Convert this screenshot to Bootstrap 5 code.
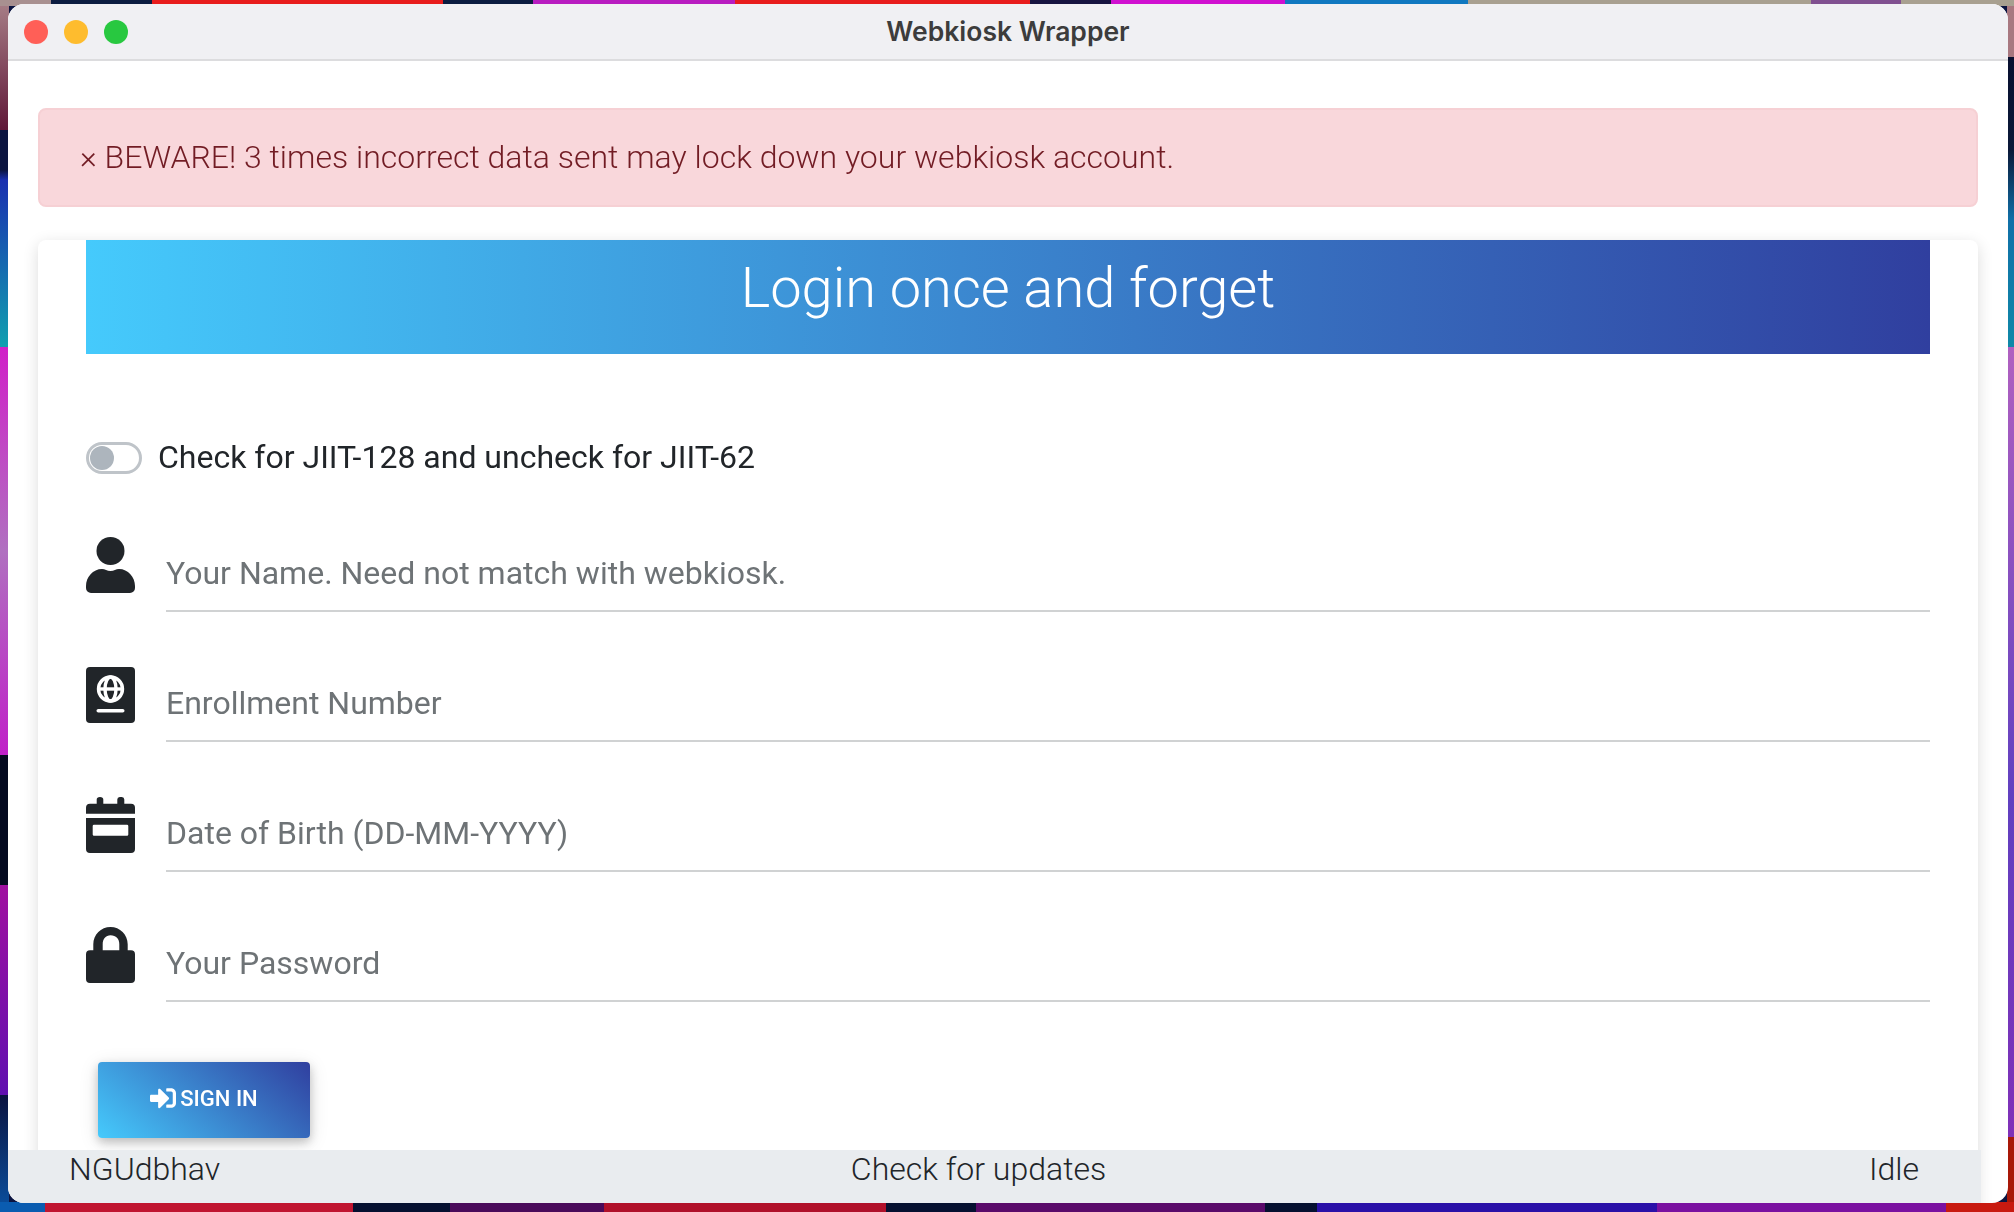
<!DOCTYPE html>
<html lang="en">
<head>
<meta charset="utf-8">
<title>Webkiosk Wrapper</title>
<link rel="stylesheet" href="https://cdn.jsdelivr.net/npm/bootstrap@5.3.0/dist/css/bootstrap.min.css">
<style>
html,body{height:100%;margin:0}
body{font-family:Roboto,"Liberation Sans",sans-serif;overflow:hidden;background-color:#0b1440;background-repeat:no-repeat;
 background-image:
 linear-gradient(90deg,#a89090 0 51px,#0b1c40 51px 152px,#e81c1c 152px 443px,#0b1c40 443px 533px,#b81cc0 533px 735px,#e81c1c 735px 1030px,#161440 1030px 1111px,#d010d0 1111px 1285px,#1078c0 1285px 1468px,#a8a090 1468px 1811px,#805090 1811px 1901px,#a8a090 1901px),
 linear-gradient(90deg,#0a5cb0 0 45px,#c01530 45px 353px,#051030 353px 450px,#4a0a5a 450px 604px,#b0102a 604px 886px,#051030 886px 976px,#5a0a6a 976px 1265px,#051030 1265px 1317px,#2a10a8 1317px 1657px,#7a10a0 1657px 1946px,#c81a10 1946px),
 linear-gradient(180deg,#a88088 0,#601838 130px,#0b1440 130px 170px,#1a30b0 180px,#10a0b0 347px,#d020c8 347px,#b070c0 550px,#c020c8 755px,#050a20 755px 885px,#a010a0 885px,#6010b0 1095px,#0b1440 1095px,#0a50a0 1212px),
 linear-gradient(180deg,#a87880 0 57px,#081030 57px,#0a1838 150px,#1070a8 220px,#1088a8 347px,#b060c0 347px,#6040c0 800px,#8030b8 1137px,#a81808 1137px);
 background-size:100% 6px,100% 10px,9px 100%,7px 100%;
 background-position:0 0,0 100%,0 0,100% 0;}
.app-window{position:fixed;left:8px;top:4px;width:2000px;height:1199px;background:#fff;border-radius:16px;overflow:hidden;display:flex;flex-direction:column}
.title-bar{height:57px;flex:none;background:#f0f0f3;border-bottom:2px solid #dcdcde;position:relative;display:flex;align-items:center;justify-content:center;padding-bottom:2px}
.title-text{font:600 26.500px Inter,"Liberation Sans",sans-serif;color:#3c3c3c}
.lights{position:absolute;left:16px;top:16px;display:flex;gap:16px}
.light{width:24px;height:24px;border-radius:50%;display:block}
.app-body{flex:1 1 auto;min-height:0;overflow:hidden;padding:47px 30px 0}
.warn-box{height:99px;background:#f9d7db;border:2px solid #f6d0d4;border-radius:8px;color:#721c24;font-weight:300;font-size:32px;line-height:48px;padding:23px 40px;margin-bottom:33px}
.login-box{height:1100px;background:#fff;border-radius:8px;padding:0 48px;box-shadow:0 4px 16px rgba(0,0,0,.14)}
.login-head{height:114px;background:linear-gradient(to right,#45cafc,#303f9f);color:#fff;text-align:center;font-weight:300;font-size:56px;line-height:96px}
.switch-row{padding-top:79px;height:183px;font-size:32px;line-height:48px;color:#212529}
.sw{width:56px;height:32px;margin-top:9px;border:3px solid #bfc4c9;border-radius:16px;display:block;position:relative;flex:none}
.sw-knob{position:absolute;left:1px;top:1px;width:24px;height:24px;background:#adb5bd;border-radius:50%}
.field-row{height:130px}
.field-ico{width:49px;height:56px;flex:none;fill:#212529;display:block}
.field-input{border:0;border-bottom:2px solid #d0d2d3;border-radius:0;height:75px;padding:0 0 2px;font-size:32px;width:100%;margin-left:31px;outline:0;background:transparent;font-family:Roboto,sans-serif}
.field-input::placeholder{color:#6e7376}
.go-btn{width:212px;height:76px;margin-left:12px;margin-top:5px;padding:0 0 4px;background:linear-gradient(40deg,#45cafc,#303f9f);color:#fff;border:0;border-radius:4px;font-size:22px;font-weight:500;box-shadow:0 4px 10px rgba(0,0,0,.2),0 4px 20px rgba(0,0,0,.12)}
.status-bar{position:absolute;left:0;bottom:0;width:1973px;height:53px;background:#e9ecef;color:#212529;font-weight:300;font-size:32px;line-height:38px;padding:0 62px 0 61px}
.status-mid{margin-right:132px}
</style>
</head>
<body>
<div class="app-window">
  <div class="title-bar">
    <div class="lights"><i class="light" style="background:#ff5f57"></i><i class="light" style="background:#febc2e"></i><i class="light" style="background:#28c840"></i></div>
    <span class="title-text">Webkiosk Wrapper</span>
  </div>
  <div class="app-body">
    <div class="warn-box" role="alert">× BEWARE! 3 times incorrect data sent may lock down your webkiosk account.</div>
    <div class="login-box">
      <div class="login-head">Login once and forget</div>
      <div class="switch-row d-flex align-items-start gap-3">
        <span class="sw"><span class="sw-knob"></span></span>
        <span>Check for JIIT-128 and uncheck for JIIT-62</span>
      </div>
      <div class="field-row d-flex align-items-start">
        <svg class="field-ico" viewBox="0 0 49 56"><circle cx="24.500" cy="14" r="14"/><path d="M5 56a5 5 0 0 1-5-5v-2c0-9 7-17 16-17 3 0 5 2 8.500 2s5.500-2 8.500-2c9 0 16 8 16 17v2a5 5 0 0 1-5 5z"/></svg>
        <input class="field-input" placeholder="Your Name. Need not match with webkiosk.">
      </div>
      <div class="field-row d-flex align-items-start">
        <svg class="field-ico" viewBox="0 0 49 56"><rect width="49" height="56" rx="4"/><g fill="none" stroke="#fff" stroke-width="3.400"><circle cx="24.500" cy="22" r="12"/><ellipse cx="24.500" cy="22" rx="5.500" ry="12"/><path d="M12.500 22h24"/></g><rect x="10.500" y="42" width="28" height="3.600" rx="1.800" fill="#fff"/></svg>
        <input class="field-input" placeholder="Enrollment Number">
      </div>
      <div class="field-row d-flex align-items-start">
        <svg class="field-ico" viewBox="0 0 49 56"><path fill-rule="evenodd" d="M10.700 2.500a3.300 2.500 0 0 1 6.600 0v4.200h14V2.500a3.400 2.500 0 0 1 7 0v4.200H45a4 4 0 0 1 4 4v6H0v-6a4 4 0 0 1 4-4h6.700zM0 21h49v31a4 4 0 0 1-4 4H4a4 4 0 0 1-4-4zm8 6.700a1.300 1.300 0 0 0-1.300 1.300v8.500a1.300 1.300 0 0 0 1.300 1.300h33a1.300 1.300 0 0 0 1.300-1.300V29a1.300 1.300 0 0 0-1.300-1.300z"/></svg>
        <input class="field-input" placeholder="Date of Birth (DD-MM-YYYY)">
      </div>
      <div class="field-row d-flex align-items-start">
        <svg class="field-ico" viewBox="0 0 49 56"><path fill-rule="evenodd" d="M24.500 0C34 0 41.700 7.700 41.700 17.200v6.100H45a4 4 0 0 1 4 4V52a4 4 0 0 1-4 4H4a4 4 0 0 1-4-4V27.300a4 4 0 0 1 4-4h3.300v-6.100C7.300 7.700 15 0 24.500 0zm0 8.300c-4.600 0-7.800 3.800-7.800 8.900v6.100h16.600v-6.100c0-5.100-3.200-8.900-8.800-8.900z"/></svg>
        <input class="field-input" type="text" placeholder="Your Password">
      </div>
      <button class="btn go-btn d-flex align-items-center justify-content-center gap-1" type="button">
        <svg width="26" height="26" viewBox="0 0 512 512" fill="#fff"><path d="M416 448h-84c-6.600 0-12-5.400-12-12v-40c0-6.600 5.400-12 12-12h84c17.700 0 32-14.300 32-32V160c0-17.700-14.300-32-32-32h-84c-6.600 0-12-5.400-12-12V76c0-6.600 5.400-12 12-12h84c53 0 96 43 96 96v192c0 53-43 96-96 96zm-47-201L201 79c-15-15-41-4.500-41 17v96H24c-13.300 0-24 10.700-24 24v96c0 13.300 10.700 24 24 24h136v96c0 21.500 26 32 41 17l168-168c9.300-9.400 9.300-24.600 0-34z"/></svg>
        SIGN IN
      </button>
    </div>
  </div>
  <div class="status-bar d-flex justify-content-between">
    <span>NGUdbhav</span><span class="status-mid">Check for updates</span><span>Idle</span>
  </div>
</div>
</body>
</html>
